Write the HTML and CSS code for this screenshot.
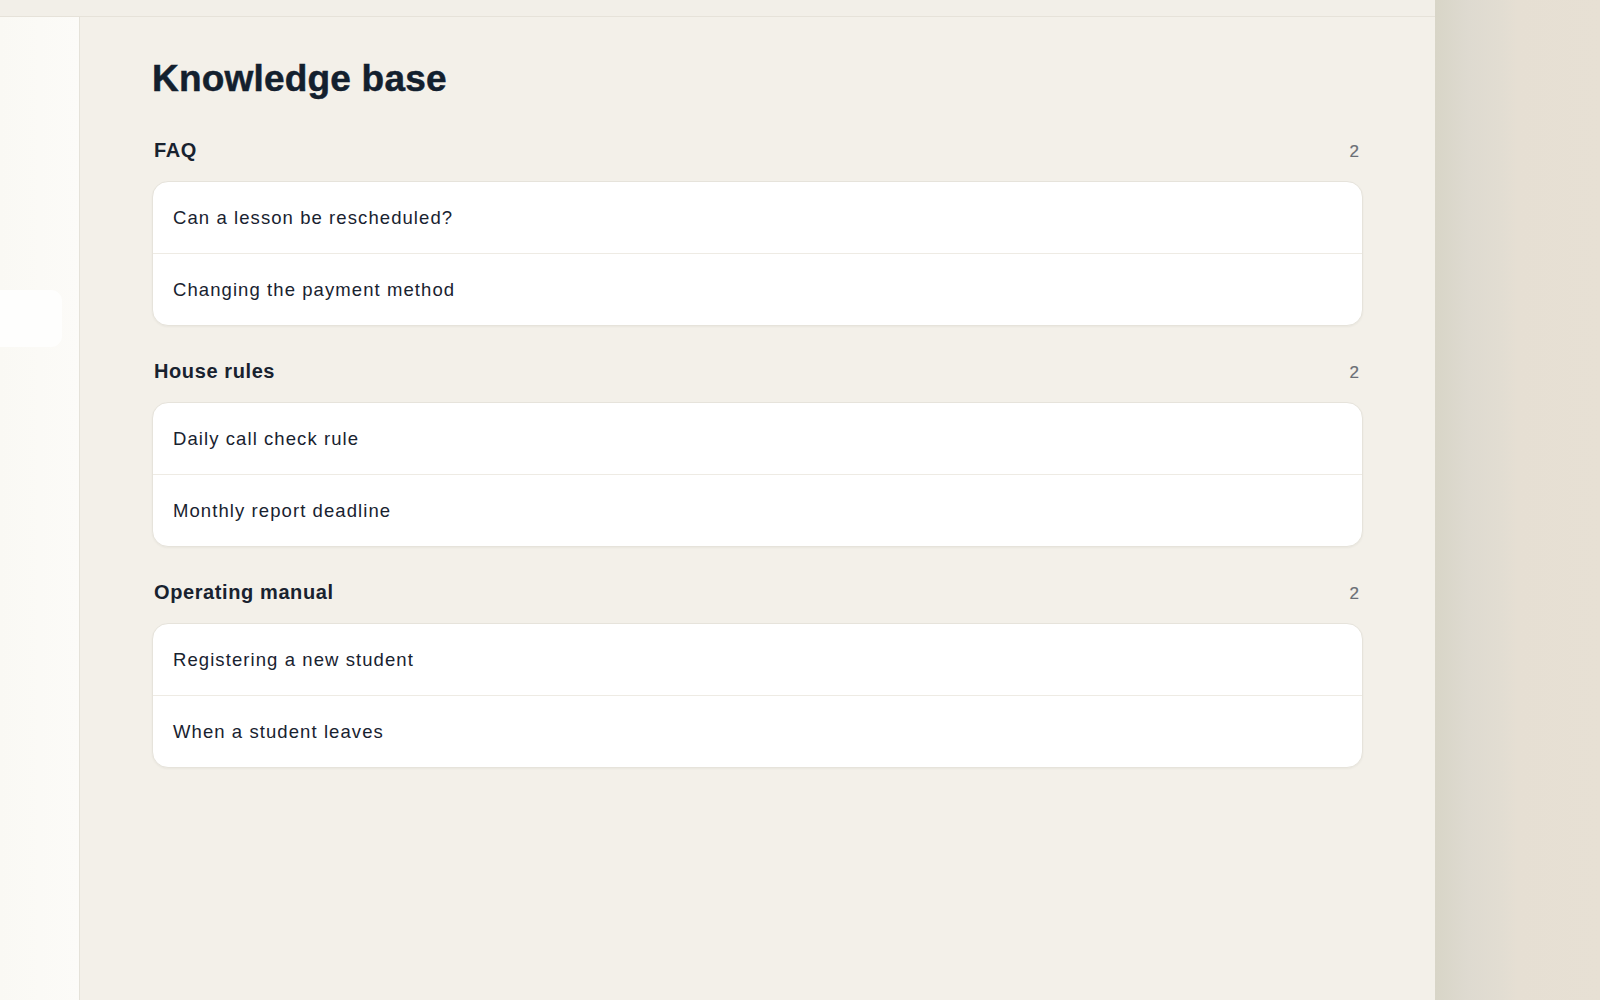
FILE: index.html
```html
<!DOCTYPE html>
<html lang="en">
<head>
<meta charset="utf-8">
<title>Knowledge base</title>
<link rel="stylesheet" href="styles.css">
</head>
<body>
<div class="app">
  <header class="topbar"></header>
  <div class="workspace">
    <nav class="sidebar">
      <div class="nav-item active"></div>
    </nav>
    <main class="main">
      <h1 class="page-title">Knowledge base</h1>

      <section class="kb-section">
        <div class="kb-head">
          <h2 class="kb-title">FAQ</h2>
          <span class="kb-count">2</span>
        </div>
        <ul class="kb-list">
          <li class="kb-item">Can a lesson be rescheduled?</li>
          <li class="kb-item">Changing the payment method</li>
        </ul>
      </section>

      <section class="kb-section">
        <div class="kb-head">
          <h2 class="kb-title">House rules</h2>
          <span class="kb-count">2</span>
        </div>
        <ul class="kb-list">
          <li class="kb-item">Daily call check rule</li>
          <li class="kb-item">Monthly report deadline</li>
        </ul>
      </section>

      <section class="kb-section">
        <div class="kb-head">
          <h2 class="kb-title">Operating manual</h2>
          <span class="kb-count">2</span>
        </div>
        <ul class="kb-list">
          <li class="kb-item">Registering a new student</li>
          <li class="kb-item">When a student leaves</li>
        </ul>
      </section>
    </main>
  </div>
</div>
<aside class="side-panel"></aside>
</body>
</html>
```

FILE: styles.css
```css
* {
  box-sizing: border-box;
}

html,
body {
  margin: 0;
  height: 100%;
}

body {
  display: flex;
  font-family: "Liberation Sans", Arial, sans-serif;
  color: #18222f;
  background: #f3f0e9;
  overflow: hidden;
}

.app {
  width: 1435px;
  flex: none;
  display: flex;
  flex-direction: column;
  height: 100%;
}

.topbar {
  height: 17px;
  flex: none;
  background: #f2efe8;
  border-bottom: 1px solid #e6e2d9;
}

.workspace {
  flex: 1;
  display: flex;
  min-height: 0;
}

.sidebar {
  width: 80px;
  flex: none;
  background: linear-gradient(90deg, #faf9f4 0%, #fcfbf8 100%);
  border-right: 1px solid #e5e2d9;
  padding-top: 273px;
}

.nav-item {
  width: 74px;
  height: 57px;
  margin-left: -12px;
  border-radius: 11px;
  background: #fefefd;
}

.main {
  flex: 1;
  background: #f3f0e9;
  padding: 40px 72px 0 72px;
}

.page-title {
  margin: 0 0 37px;
  font-size: 37px;
  line-height: 44px;
  font-weight: 700;
  letter-spacing: 0.2px;
  color: #13202e;
  -webkit-text-stroke: 0.5px #13202e;
}

.kb-section {
  margin-bottom: 33px;
}

.kb-head {
  display: flex;
  justify-content: space-between;
  align-items: baseline;
  padding: 0 4px 0 2px;
  margin-bottom: 17px;
}

.kb-title {
  margin: 0;
  font-size: 20px;
  line-height: 24px;
  font-weight: 700;
  letter-spacing: 0.6px;
  color: #18222f;
}

.kb-count {
  font-size: 17px;
  line-height: 24px;
  color: #6a6e75;
  -webkit-text-stroke: 0.2px #6a6e75;
}

.kb-list {
  list-style: none;
  margin: 0;
  padding: 0;
  background: #ffffff;
  border: 1px solid #e6e3db;
  border-radius: 16px;
  box-shadow: 0 1px 2px rgba(60, 50, 30, 0.05);
  overflow: hidden;
}

.kb-item {
  height: 71px;
  display: flex;
  align-items: center;
  padding: 0 20px;
  font-size: 18.5px;
  letter-spacing: 1.08px;
  color: #18222f;
}

.kb-item + .kb-item {
  height: 72px;
  border-top: 1px solid #eeebe4;
}

.side-panel {
  flex: 1;
  background: linear-gradient(90deg, #d8d5c7 0%, #dedad0 20%, #e2ddd2 40%, #e6dfd3 50%, #e7e0d4 100%);
}
```
